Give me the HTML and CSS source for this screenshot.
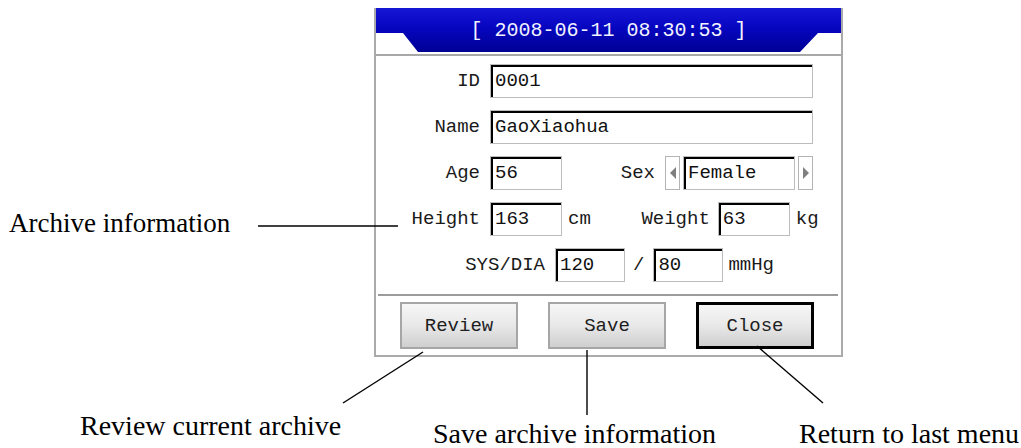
FILE: index.html
```html
<!DOCTYPE html>
<html>
<head>
<meta charset="utf-8">
<link rel="stylesheet" href="styles.css">
</head>
<body>
<div class="stage">
  <div class="panel">
    <div class="header">[ 2008-06-11 08:30:53 ]</div>
    <div class="hrule"></div>
    <div class="form">
      <div class="row">
        <span class="lbl">ID</span>
        <span class="field f-wide">0001</span>
      </div>
      <div class="row">
        <span class="lbl">Name</span>
        <span class="field f-wide">GaoXiaohua</span>
      </div>
      <div class="row">
        <span class="lbl">Age</span>
        <span class="field f-short">56</span>
        <span class="lbl2 w-sex">Sex</span>
        <span class="arrow a-left"></span>
        <span class="field f-sex">Female</span>
        <span class="arrow a-right"></span>
      </div>
      <div class="row">
        <span class="lbl">Height</span>
        <span class="field f-short">163</span>
        <span class="unit">cm</span>
        <span class="lbl2 w-weight">Weight</span>
        <span class="field f-short f-weight">63</span>
        <span class="unit">kg</span>
      </div>
      <div class="row">
        <span class="lbl w-sys">SYS/DIA</span>
        <span class="field f-bp f-sys">120</span>
        <span class="slash">/</span>
        <span class="field f-bp f-dia">80</span>
        <span class="unit u-mmhg">mmHg</span>
      </div>
    </div>
    <div class="sep"></div>
    <div class="buttons">
      <button class="btn">Review</button>
      <button class="btn">Save</button>
      <button class="btn btn-focus">Close</button>
    </div>
  </div>

  <svg class="callouts" width="1021" height="448" viewBox="0 0 1021 448">
    <line x1="258" y1="226" x2="398" y2="226"/>
    <line x1="423" y1="352" x2="343" y2="403"/>
    <line x1="587" y1="350" x2="587" y2="415"/>
    <line x1="757" y1="346" x2="823" y2="403"/>
  </svg>

  <span class="note n-archive">Archive information</span>
  <span class="note n-review">Review current archive</span>
  <span class="note n-save">Save archive information</span>
  <span class="note n-return">Return to last menu</span>
</div>
</body>
</html>
```

FILE: styles.css
```css
html, body {
  margin: 0;
  padding: 0;
  background: #ffffff;
}

.stage {
  position: relative;
  width: 1021px;
  height: 448px;
  overflow: hidden;
  background: #ffffff;
}

.panel {
  margin: 8px 0 0 374px;
  width: 469px;
  height: 349px;
  box-sizing: border-box;
  border: 2px solid #aaaaaa;
  border-top: none;
  background: #ffffff;
  font-family: "Liberation Mono", "DejaVu Sans Mono", monospace;
  font-size: 19px;
  color: #1a1a1a;
}

.header {
  height: 44px;
  box-sizing: border-box;
  padding-top: 1px;
  line-height: 43px;
  text-align: center;
  font-size: 20px;
  color: #f2f2ff;
  white-space: pre;
  background: linear-gradient(#1616d6 0%, #0606c0 45%, #000094 100%);
  clip-path: polygon(0 0, 100% 0, 100% 25px, calc(100% - 23px) 25px,
    calc(100% - 41px) 100%, 42px 100%, 27px 25px, 0 25px);
}

.hrule {
  height: 2px;
  margin-top: 2px;
  background: #a8a8a8;
}

.form {
  padding-top: 8px;
  display: flex;
  flex-direction: column;
  gap: 12px;
}

.row {
  display: flex;
  align-items: center;
  height: 34px;
  line-height: 34px;
  white-space: pre;
}

.lbl {
  width: 104px;
  text-align: right;
  flex: none;
}

.lbl2 {
  text-align: right;
  flex: none;
}

.w-sex { width: 93px; }
.w-weight { width: 119px; }
.w-sys { width: 169px; }

.field {
  flex: none;
  box-sizing: border-box;
  height: 34px;
  line-height: 32px;
  padding-left: 4px;
  background: #ffffff;
  border: 1px solid #bcbcbc;
  box-shadow: inset 2px 2px 0 #000000;
  color: #111111;
}

.lbl + .field { margin-left: 10px; }

.f-wide { width: 323px; }
.f-short { width: 72px; }
.f-weight { margin-left: 8px; }
.f-sex { width: 112px; margin-left: 3px; }
.f-bp { width: 70px; }
.f-sys { margin-left: 12px; }
.f-dia { margin-left: 9px; }

.unit {
  margin-left: 6px;
  flex: none;
}

.u-mmhg { margin-left: 5px; }

.slash {
  margin-left: 8px;
  flex: none;
}

.arrow {
  flex: none;
  box-sizing: border-box;
  width: 15px;
  height: 34px;
  border: 1px solid #b4b4b4;
  background: #ffffff;
  display: flex;
  align-items: center;
  justify-content: center;
}

.a-left { margin-left: 10px; }
.a-right { margin-left: 3px; }

.a-left::before {
  content: "";
  width: 0;
  height: 0;
  border-top: 6px solid transparent;
  border-bottom: 6px solid transparent;
  border-right: 6px solid #808080;
}

.a-right::before {
  content: "";
  width: 0;
  height: 0;
  border-top: 6px solid transparent;
  border-bottom: 6px solid transparent;
  border-left: 6px solid #808080;
}

.sep {
  height: 2px;
  margin: 12px 3px 0 2px;
  background: #9c9c9c;
}

.buttons {
  display: flex;
  gap: 30px;
  padding-left: 24px;
  margin-top: 6px;
}

.btn {
  box-sizing: border-box;
  width: 118px;
  height: 47px;
  padding: 0;
  margin: 0;
  font-family: "Liberation Mono", "DejaVu Sans Mono", monospace;
  font-size: 19px;
  color: #1e1e1e;
  background: linear-gradient(#f6f6f6 0%, #e8e8e8 50%, #cfcfcf 100%);
  border: 2px solid #a6a6a6;
  border-radius: 0;
}

.btn-focus {
  border: 3px solid #000000;
}

.callouts {
  position: absolute;
  left: 0;
  top: 0;
  pointer-events: none;
}

.callouts line {
  stroke: #000000;
  stroke-width: 1.4;
}

.note {
  position: absolute;
  font-family: "Liberation Serif", "Times New Roman", serif;
  font-size: 27px;
  line-height: 27px;
  color: #000000;
  white-space: nowrap;
}

.n-archive { left: 9px; top: 210px; }
.n-review { left: 80px; top: 412px; font-size: 28px; line-height: 28px; }
.n-save { left: 433px; top: 420px; font-size: 28px; line-height: 28px; }
.n-return { left: 799px; top: 420px; font-size: 28px; line-height: 28px; }
```
